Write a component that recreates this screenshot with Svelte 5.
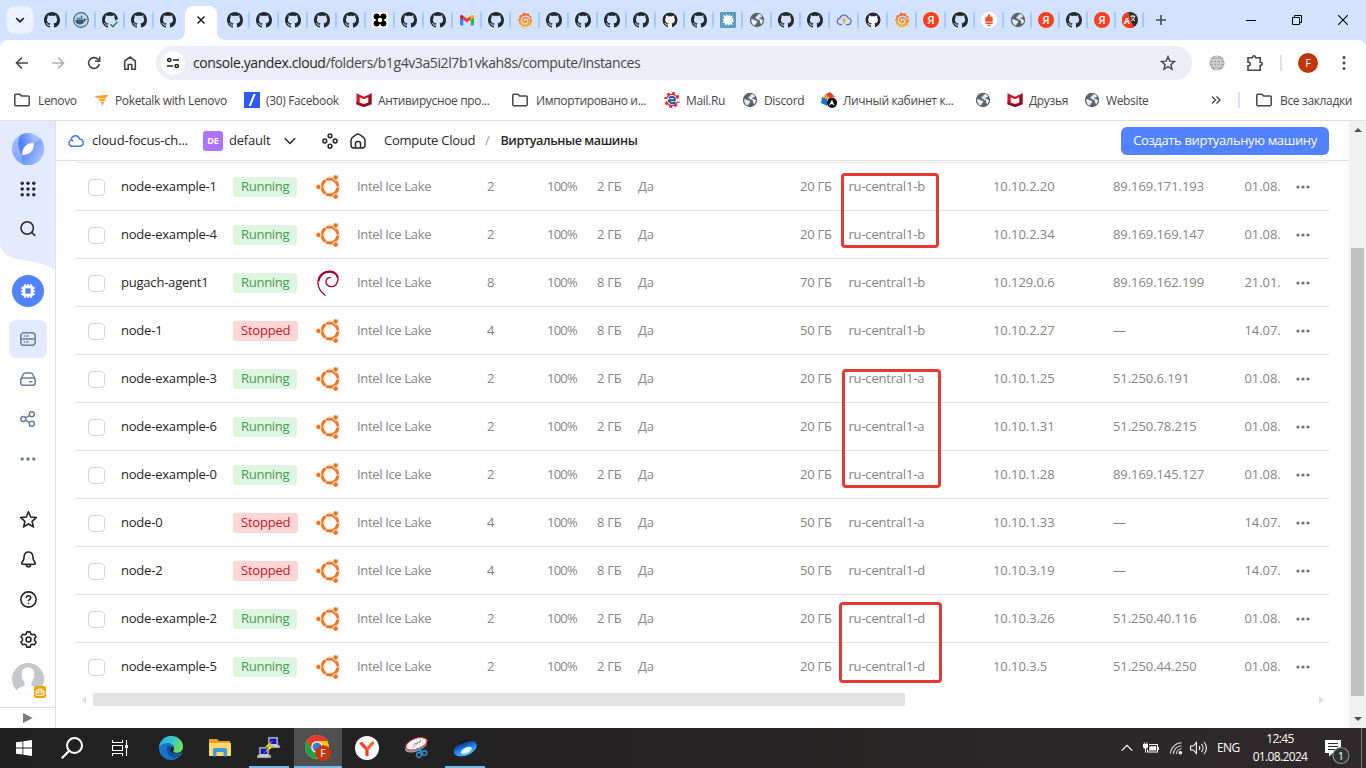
<script>
  const tabsBefore = ['github', 'docker', 'githubCheck', 'github', 'github'];
  const tabsAfter = [
    'github', 'github', 'github', 'github', 'github', 'knot', 'github', 'github', 'gmail', 'github',
    'grafana', 'github', 'github', 'github', 'github', 'githubLight', 'github', 'splat', 'globe',
    'github', 'github', 'cloudBolt', 'githubLight', 'grafana', 'ya', 'github', 'prometheus'
  ];
  const tabsNarrow = ['globe', 'ya', 'github', 'ya', 'translate'];

  const bookmarks = [
    { icon: 'folder', label: 'Lenovo', width: 80 },
    { icon: 'bird', label: 'Poketalk with Lenovo', width: 150 },
    { icon: 'slash', label: '(30) Facebook', width: 112 },
    { icon: 'mcafee', label: 'Антивирусное про...', width: 156 },
    { icon: 'folder', label: 'Импортировано и...', width: 152 },
    { icon: 'mailru', label: 'Mail.Ru', width: 78 },
    { icon: 'globe', label: 'Discord', width: 79 },
    { icon: 'cabinet', label: 'Личный кабинет к...', width: 154 },
    { icon: 'globe', label: '', width: 32 },
    { icon: 'mcafee', label: 'Друзья', width: 77 },
    { icon: 'globe', label: 'Website', width: 80 }
  ];

  const vm = (name, running, cpu, ram, disk, zone, ip, ext, date, os = 'ubuntu') =>
    ({ name, running, cpu, ram, disk, zone, ip, ext, date, os });

  const machines = [
    vm('node-example-1', true, 2, 2, 20, 'b', '10.10.2.20', '89.169.171.193', '01.08.'),
    vm('node-example-4', true, 2, 2, 20, 'b', '10.10.2.34', '89.169.169.147', '01.08.'),
    vm('pugach-agent1', true, 8, 8, 70, 'b', '10.129.0.6', '89.169.162.199', '21.01.', 'debian'),
    vm('node-1', false, 4, 8, 50, 'b', '10.10.2.27', '—', '14.07.'),
    vm('node-example-3', true, 2, 2, 20, 'a', '10.10.1.25', '51.250.6.191', '01.08.'),
    vm('node-example-6', true, 2, 2, 20, 'a', '10.10.1.31', '51.250.78.215', '01.08.'),
    vm('node-example-0', true, 2, 2, 20, 'a', '10.10.1.28', '89.169.145.127', '01.08.'),
    vm('node-0', false, 4, 8, 50, 'a', '10.10.1.33', '—', '14.07.'),
    vm('node-2', false, 4, 8, 50, 'd', '10.10.3.19', '—', '14.07.'),
    vm('node-example-2', true, 2, 2, 20, 'd', '10.10.3.26', '51.250.40.116', '01.08.'),
    vm('node-example-5', true, 2, 2, 20, 'd', '10.10.3.5', '51.250.44.250', '01.08.')
  ];

  const octocat = 'M8 0C3.58 0 0 3.58 0 8c0 3.54 2.29 6.53 5.47 7.59.4.07.55-.17.55-.38 0-.19-.01-.82-.01-1.49-2.01.37-2.53-.49-2.69-.94-.09-.23-.48-.94-.82-1.13-.28-.15-.68-.52-.01-.53.63-.01 1.08.58 1.23.82.72 1.21 1.87.87 2.33.66.07-.52.28-.87.51-1.07-1.78-.2-3.64-.89-3.64-3.95 0-.87.31-1.59.82-2.15-.08-.2-.36-1.02.08-2.12 0 0 .67-.21 2.2.82.64-.18 1.32-.27 2-.27s1.36.09 2 .27c1.53-1.04 2.2-.82 2.2-.82.44 1.1.16 1.92.08 2.12.51.56.82 1.27.82 2.15 0 3.07-1.87 3.75-3.65 3.95.29.25.54.73.54 1.48 0 1.07-.01 1.93-.01 2.2 0 .21.15.46.55.38A8.01 8.01 0 0 0 16 8c0-4.42-3.58-8-8-8z';
</script>

{#snippet glyph(name)}
  <svg class="g16" viewBox="0 0 16 16" fill="none">
    {#if name === 'github'}
      <path fill="#24292f" d={octocat} />
    {:else if name === 'githubLight'}
      <circle cx="8" cy="8" r="8" fill="#fff" /><path fill="#24292f" transform="translate(.5 .5) scale(.94)" d={octocat} />
    {:else if name === 'githubCheck'}
      <path fill="#24292f" d={octocat} /><path fill="#d3e3fd" d="M16 7v9H7v-3l1.500-2z" />
      <path d="M8.500 12.300l2.400 2.400L15.500 9.800" stroke="#1a8a3c" stroke-width="1.500" />
    {:else if name === 'docker'}
      <circle cx="8" cy="8" r="7.300" fill="#c4d7ea" stroke="#46667f" stroke-width="1.200" />
      <path fill="#2f5b7a" d="M2.400 7.800h8.500c.3-.6.2-1.300-.2-1.900.9.1 1.300.6 1.500 1.200.6-.1 1.200 0 1.600.3-.4.7-1.100 1-1.900 1-.9 2.700-2.700 4-5.400 4-2.600 0-4-1.600-4.100-4.600zM4 5.700h1.500v1.500H4zM5.900 5.700h1.500v1.500H5.900zM7.800 5.700h1.500v1.500H7.800zM7.800 3.800h1.500v1.500H7.800z" />
    {:else if name === 'knot'}
      <rect width="16" height="16" rx="3" fill="#fff" />
      <rect x="5" y="5" width="6" height="6" stroke="#000" stroke-width="1.600" />
      <g fill="#000"><circle cx="4.600" cy="4.600" r="3" /><circle cx="11.400" cy="4.600" r="3" /><circle cx="4.600" cy="11.400" r="3" /><circle cx="11.400" cy="11.400" r="3" /></g>
      <rect x="6.200" y="6.200" width="3.600" height="3.600" fill="#fff" />
    {:else if name === 'gmail'}
      <path fill="#4285f4" d="M1 3.500l3.300 2.300V13.500H2a1 1 0 0 1-1-1z" />
      <path fill="#34a853" d="M11.700 6L15 3.500v9a1 1 0 0 1-1 1h-2.300z" />
      <path fill="#ea4335" d="M4.300 3.700L8 6.500l3.700-2.800v4L8 10.500 4.300 7.700z" />
      <path fill="#c5221f" d="M1 4.500C1 2.800 2.600 2.300 4.300 3.700v4L1 5.500z" />
      <path fill="#fbbc04" d="M15 4.500c0-1.700-1.600-2.200-3.300-.8v4L15 5.500z" />
    {:else if name === 'grafana'}
      <linearGradient id="graf" x1="0" y1="0" x2="0" y2="1"><stop stop-color="#f05a28" /><stop offset="1" stop-color="#fbc02d" /></linearGradient>
      <path fill="url(#graf)" d="M7 .5l2 1.200 2.500-.5.9 2.300 2 1.100-.2 2.400 1.400 1.900-1.500 1.800-.1 2.500-2.400.7L9.800 15.500 7.700 14.700l-2.500.7-1-2.200-2.300-1.100.4-2.300L.7 7.900l1.600-1.700.1-2.600 2.500-.7z" />
      <path d="M13 7.500C12.300 4.800 9.600 3.500 7.300 4.300 4.500 5.200 3.500 8 5 10.400c1.200 1.900 4.200 2.200 5.500.3 1-1.500.1-3.500-1.500-3.700-1.300-.2-2.300 1-1.500 2" stroke="#d3e3fd" stroke-width="1.300" />
    {:else if name === 'splat'}
      <rect width="16" height="16" rx="1" fill="#5b9bbb" />
      <path fill="#fff" d="M3 2.500l2.700 1.800L6.600 2l1.600 2.200 1.700-2 .4 2.300L13 3.500l-1 2.800 2.200.5-1.800 1.400 1.800 1.600-2.300.5.6 2.900-2.700-1.300L8.700 14l-1.300-2-2.200 1.600-.1-2.700-2.700.2 1.500-2.300L2.200 7.500l1.900-1z" />
    {:else if name === 'globe'}
      <circle cx="8" cy="8" r="7.200" fill="#5f6368" />
      <path fill="#e3ebf7" d="M2.200 7.200C3.600 7 5 7.400 5.700 8.300c1.500.3 2.700.7 2.500 1.800-.2 1-1.500 1.200-1.700 2.500L5.400 13.500C3.100 12.400 2 10 2.200 7.200zM8.300 3l2-1c1 .4 2 1.100 2.600 2 .1 1-.9 1.600-1.700 1.400L9.600 6.400l2.600.7c.5.9 1.300 1.200 1.900 1.100-.1 1.600-.9 3.100-2 4.100l-1.200-2.100.1-1.700-2.100-.8-1.500-1.300-1.200-.4.7-1.600 1.600-.2z" />
    {:else if name === 'cloudBolt'}
      <path d="M4.200 12.700a3.300 3.300 0 0 1-.3-6.500A4.300 4.300 0 0 1 12 5.800a3.500 3.500 0 0 1 .2 6.900H10M4.200 12.700H6" stroke="#5870b8" stroke-width="1.200" />
      <path fill="#f2a32c" d="M9.500 4.500L5.800 9h1.900l-1.500 4.500 4.300-5.500H8.300z" />
    {:else if name === 'ya'}
      <circle cx="8" cy="8" r="8" fill="#fc3f1d" /><text x="8" y="12.200" text-anchor="middle" font-size="11.500" font-weight="600" fill="#fff">Я</text>
    {:else if name === 'prometheus'}
      <circle cx="8" cy="8" r="8" fill="#fff" />
      <path fill="#e6522c" d="M8 1.500c.8 1.500 1.800 2.500 1.500 4.200.7-.5.9-1.100.9-1.900 1.300 2 1.900 3.800 1 6H4.600c-1-2.200-.3-4 .9-5.700 0 .7.300 1.200.7 1.600C6 4 7.500 3 8 1.500zM4.300 10.500h7.400V12H4.300zM6 12.700h4c-.2.900-1 1.500-2 1.500s-1.800-.6-2-1.500z" />
    {:else if name === 'translate'}
      <circle cx="8" cy="8" r="8" fill="#2b2b2e" /><path fill="#fc3f1d" d="M6.500.2A8 8 0 1 0 12 14.900L8.500 8z" />
      <text x="5" y="11.800" text-anchor="middle" font-size="8.500" font-weight="700" fill="#fff">A</text>
      <path d="M8.300 4.200h5M10.800 3v1.200M12.600 4.500C12 7 10.500 8 9.300 8.600M9.500 5.500c.6 1.700 2 2.700 3.500 3.200" stroke="#fff" stroke-width="1" />
    {:else if name === 'folder'}
      <path d="M.8 3.200a1 1 0 0 1 1-1h4l1.700 1.700h6.700a1 1 0 0 1 1 1v7.900a1 1 0 0 1-1 1H1.800a1 1 0 0 1-1-1z" stroke="#474747" stroke-width="1.500" />
    {:else if name === 'bird'}
      <path fill="#f9a32a" d="M.5 4.200C4 3.800 9 3 14.300 2.800c-.4 1.300-1 2-2 2.600-1 .7-1.500.4-2.500.8C7 6.500 2.800 6.800.5 4.200zM4 7.300C7 7.300 9 7 12 6.200c-.2 1.600-1 2.500-2.800 3C7 9.600 5 9.200 4 7.300zM6.200 10c1.500.1 2.500 0 3.900-.4-.2 1.700-.9 3.300-2.300 4.300.3-1.600-.3-2.800-1.600-3.900z" />
    {:else if name === 'slash'}
      <rect width="16" height="16" fill="#2f5bf5" /><path fill="#fff" d="M9.500 2h2.200L6.900 14H4.700z" />
    {:else if name === 'mcafee'}
      <path fill="#d3142b" d="M.5 1.300L8 4.700l7.500-3.400v11L8 15 .5 12.300z" /><path fill="#8f0f1e" d="M.5 9l3 2.500L8 12.500V15L.5 12.300zM12.300 5l3.200-3.700v11L8 15v-2.500l4.300-2z" />
      <path fill="#fff" d="M3.700 5.200L8 7.300l4.300-2.100v5.200L8 12l-4.300-1.600z" />
    {:else if name === 'mailru'}
      <circle cx="8" cy="8" r="6.600" stroke="#e0262d" stroke-width="2.600" stroke-dasharray="2.700 2.480" /><circle cx="8" cy="8" r="5.600" fill="#fff" stroke="#e0262d" stroke-width="1.200" /><path fill="#fff" d="M12.500 7H16v2.500h-3.500zM0 7h3.500v2H0z" />
      <path d="M4 8.200h6.800c.6-2.200-.8-3.200-2.800-3.200-1.400 0-2.300.4-3 1M5 8.500c.3 3 4.500 3.500 6.500 1.700" stroke="#1b4fa0" stroke-width="1.900" />
    {:else if name === 'cabinet'}
      <path fill="#1976c5" d="M1 5l5 2v7L0 11z" /><path fill="#f3a01c" d="M2 5l3-3 5 1-2 5z" /><path fill="#e23b2e" d="M5 2l4-2 3 3 2 2-5 1z" />
      <circle cx="11" cy="10.800" r="5.100" fill="#111" /><path fill="#fff" d="M11 7.600l2.300 5.600H12l-.5-1.200H9.900l-.7 1.200H8.100z" />
    {/if}
  </svg>
{/snippet}

{#snippet ubuntu()}
  <svg class="os" viewBox="0 0 24 24" fill="none">
    <circle cx="14" cy="12" r="8" stroke="#f47421" stroke-width="3" />
    <path d="M14 12h10.500M14 12L8.800 3M14 12L8.800 21" stroke="#fff" stroke-width=".9" />
    <g fill="#f47421" stroke="#fff" stroke-width=".9"><circle cx="2.500" cy="12" r="2.700" /><circle cx="19.600" cy="2.500" r="2.800" /><circle cx="19.600" cy="21.500" r="2.800" /></g>
  </svg>
{/snippet}

{#snippet tab(name, narrow)}
  <div class="tab" class:narrow>{@render glyph(name)}<i></i></div>
{/snippet}

<div class="screen">
  <div class="strip">
    <div class="tablist"><svg width="10" height="6" viewBox="0 0 10 6"><path d="M1.200 1l3.800 3.700L8.800 1" fill="none" stroke="#1f1f1f" stroke-width="1.700" /></svg></div>
    <div class="tabs first">{#each tabsBefore as t}{@render tab(t, false)}{/each}</div>
    <div class="active"><svg width="8" height="8" viewBox="0 0 8 8"><path d="M.5.500l7 7M7.500.500l-7 7" stroke="#1f1f1f" stroke-width="1.500" /></svg></div>
    <div class="tabs">{#each tabsAfter as t}{@render tab(t, false)}{/each}{#each tabsNarrow as t}{@render tab(t, true)}{/each}</div>
    <svg class="plus" width="10" height="10" viewBox="0 0 10 10"><path d="M5 0v10M0 5h10" stroke="#474747" stroke-width="1.600" /></svg>
    <div class="win">
      <svg viewBox="0 0 10 10"><path d="M0 5.500h10" stroke="#000" /></svg>
      <svg viewBox="0 0 10 10"><path d="M.5 2.500h7v7h-7zM2.500 2.500v-2h7v7h-2" fill="none" stroke="#000" /></svg>
      <svg viewBox="0 0 10 10"><path d="M0 0l10 10M10 0L0 10" stroke="#000" stroke-width="1.100" /></svg>
    </div>
  </div>

  <div class="toolwrap"><div class="toolbar">
    <div class="nav">
      <svg viewBox="0 0 16 16"><path d="M14 8H3M8 2.500L2.500 8 8 13.500" stroke="#474747" /></svg>
      <svg viewBox="0 0 16 16"><path d="M2 8h11M8 2.500L13.500 8 8 13.500" stroke="#b0b0b0" /></svg>
      <svg viewBox="0 0 16 16"><path d="M13.300 9A5.400 5.400 0 1 1 12.200 4.600L13.500 6M13.700 1.500V6.200H9" stroke="#474747" /></svg>
      <svg viewBox="0 0 16 16"><path d="M2.700 14.200V6L8 2l5.300 4v8.200H9.800V9.500H6.200v4.700z" stroke="#474747" /></svg>
    </div>
    <div class="omni">
      <span class="tune"><svg viewBox="0 0 12 12"><g fill="none" stroke="#1f1f1f" stroke-width="1.500"><circle cx="2.300" cy="3" r="1.600" /><circle cx="9.700" cy="9" r="1.600" /><path d="M6 3h6M0 9h6" /></g></svg></span>
      <span class="url"><b>console.yandex.cloud</b>/folders/b1g4v3a5i2l7b1vkah8s/compute/instances</span>
      <svg class="fav" viewBox="0 0 16 16"><path d="M8 1.600l1.800 4.500 4.800.4-3.700 3.100 1.200 4.700L8 11.700l-4.100 2.600 1.200-4.700L1.400 6.500l4.800-.4z" fill="none" stroke="#474747" stroke-width="1.400" /></svg>
    </div>
    <svg class="ext1" viewBox="0 0 16 16"><circle cx="8" cy="8" r="7.600" fill="#a3a3a3" /><path d="M.5 5h15M.5 8h15M.5 11h15M8 .5v15M8 .5c-5 4-5 11 0 15M8 .5c5 4 5 11 0 15" fill="none" stroke="#eee" stroke-width=".8" /></svg>
    <svg class="ext2" viewBox="0 0 18 18"><path d="M2 3.700h4.500C6.300 1 9.700 1 9.500 3.700h4.700v4.600c2.700-.2 2.700 3.200 0 3v4.900H2v-4.300c3 .2 3-4 0-3.800z" fill="none" stroke="#474747" stroke-width="1.600" /></svg>
    <i class="vsep"></i>
    <span class="profile">F</span>
    <svg class="more" viewBox="0 0 4 16"><g fill="#474747"><circle cx="2" cy="2.500" r="1.500" /><circle cx="2" cy="8" r="1.500" /><circle cx="2" cy="13.500" r="1.500" /></g></svg>
  </div></div>

  <div class="bookmarks">
    {#each bookmarks as b}
      <div class="bm {b.icon}" style="width: {b.width}px">{@render glyph(b.icon)}<span>{b.label}</span></div>
    {/each}
    <svg class="chev" viewBox="0 0 10 8"><path d="M1 .500L4.500 4 1 7.500M5.500.500L9 4 5.500 7.500" fill="none" stroke="#474747" stroke-width="1.400" /></svg>
    <i class="vsep bsep"></i>
    <div class="bm folder all">{@render glyph('folder')}<span>Все закладки</span></div>
  </div>

  <div class="page">
    <aside>
      <svg class="wave" viewBox="0 0 55 150" preserveAspectRatio="none"><path fill="#e5ebff" d="M0 0h55v149C51 146 44 143 36 141.500L15 137.500C6 136 0 130 0 121z" /></svg>
      <div class="side">
        <svg class="s32" viewBox="0 0 32 32">
          <linearGradient id="ya" x1="0" y1="0" x2="0" y2="1"><stop stop-color="#a9c1ff" /><stop offset="1" stop-color="#7ea2fb" /></linearGradient>
          <linearGradient id="yb" x1="1" y1="0" x2="0" y2=".5"><stop stop-color="#b4c8ff" /><stop offset=".8" stop-color="#5282ff" /></linearGradient>
          <linearGradient id="yc" x1="0" y1="0" x2="1" y2=".6"><stop stop-color="#3f76ff" /><stop offset="1" stop-color="#a9c1ff" /></linearGradient>
          <circle cx="16" cy="16" r="16" fill="url(#ya)" />
          <path fill="url(#yb)" d="M9.500 1.400A16 16 0 0 1 21.500 1c1.500 3 1.500 6 .5 9-6 0-11 4-12 12C5 15 5 6 9.500 1.400z" />
          <path fill="url(#yc)" d="M10.200 22c-.8 3-.8 6 .2 9.200A16 16 0 0 0 32 16c0-5-2-9-4-11 0 2-2 4-6 5 .2 6.500-3.500 12-11.800 12z" />
          <path fill="#fff" d="M22 10c.2 6.500-3.500 12-11.800 12C10 14.500 14.500 9.500 22 10z" />
        </svg>
        <svg viewBox="0 0 16 16"><g fill="#262626"><circle cx="2.200" cy="2.200" r="1.700" /><circle cx="8" cy="2.200" r="1.700" /><circle cx="13.800" cy="2.200" r="1.700" /><circle cx="2.200" cy="8" r="1.700" /><circle cx="8" cy="8" r="1.700" /><circle cx="13.800" cy="8" r="1.700" /><circle cx="2.200" cy="13.800" r="1.700" /><circle cx="8" cy="13.800" r="1.700" /><circle cx="13.800" cy="13.800" r="1.700" /></g></svg>
        <svg viewBox="0 0 16 16"><circle cx="7.200" cy="7" r="6.200" fill="none" stroke="#262626" stroke-width="1.500" /><path d="M11.800 11.500l3.500 3.500" stroke="#262626" stroke-width="1.600" /></svg>
        <svg class="s32 chip" viewBox="0 0 32 32"><circle cx="16" cy="16" r="16" fill="#5282ff" /><path d="M13 9v14M16 9v14M19 9v14M9 13h14M9 16h14M9 19h14" stroke="#fff" stroke-width="1.500" /><rect x="10.500" y="10.500" width="11" height="11" rx="2" fill="#fff" /><rect x="13.300" y="13.300" width="5.400" height="5.400" fill="#5282ff" /></svg>
        <span class="sel"><svg class="mut" viewBox="0 0 16 16"><rect x=".8" y="1.800" width="14.400" height="12.400" rx="3" /><path d="M1 8h14M3.700 5H5M6 5h2.500M3.700 11H5M6 11h2.500" /></svg></span>
        <svg class="mut" viewBox="0 0 16 16"><path d="M1 8.500l2.200-5A2.500 2.500 0 0 1 5.500 2h5a2.500 2.500 0 0 1 2.300 1.500l2.200 5" /><rect x=".8" y="7" width="14.400" height="7.200" rx="2.500" /><path d="M9 10.700h3.500" /></svg>
        <svg class="mut" viewBox="0 0 16 16"><circle cx="3.300" cy="8" r="2.500" /><circle cx="11.800" cy="3.300" r="2.500" /><circle cx="11.800" cy="12.700" r="2.500" /><path d="M5.500 6.800l4.100-2.400M5.500 9.200l4.100 2.400" /></svg>
        <svg class="dots" viewBox="0 0 16 16"><g fill="#6b8099"><circle cx="2.200" cy="8" r="1.700" /><circle cx="8" cy="8" r="1.700" /><circle cx="13.800" cy="8" r="1.700" /></g></svg>
        <svg class="drk star" viewBox="0 0 16 16"><path d="M8 .900l2.100 4.800 5.200.500-3.900 3.500 1.100 5.100L8 12.200l-4.500 2.600 1.100-5.100L.7 6.200l5.200-.5z" /></svg>
        <svg class="drk" viewBox="0 0 16 16"><path d="M8 1C5.500 1 4.200 2.700 3.900 5L3.500 8 1.700 11.200c-.2.600 0 1.200.8 1.200h11c.8 0 1-.6.8-1.200L12.500 8l-.4-3C11.800 2.700 10.500 1 8 1zM6 12.800c.3 2.700 3.700 2.700 4 0" /></svg>
        <svg class="drk" viewBox="0 0 16 16"><circle cx="8" cy="8" r="7.200" /><path d="M5.900 6.500c0-2.800 4.200-2.700 4.200-.2 0 1.500-2 1.600-2.100 3.100M8 11v1.400" /></svg>
        <svg class="drk" viewBox="0 0 16 16"><path d="M6.500.800h3l.6 2 1.300.700 2.100-.5 1.600 2.600L13.700 7.100v1.800l1.400 1.500-1.600 2.600-2.100-.5-1.300.7-.6 2h-3l-.6-2-1.300-.7-2.100.5L.9 10.400 2.300 8.900V7.100L.9 5.600 2.500 3l2.100.5 1.300-.7z" stroke-linejoin="round" /><circle cx="8" cy="8" r="2.300" /></svg>
        <span class="avatar">
          <svg viewBox="0 0 32 32"><defs><clipPath id="av"><circle cx="16" cy="16" r="16" /></clipPath></defs><g clip-path="url(#av)"><rect width="32" height="32" fill="#c4c8cb" /><path fill="#fff" d="M16 4.500c4 0 6.300 2.500 6.300 6.500 0 4-1 6-2.800 8v3.500l6.500 3 3 7H3l3-7 6.500-3V19c-2-2-2.800-4-2.800-8 0-4 2.300-6.500 6.300-6.500z" /></g></svg>
          <i><svg viewBox="0 0 12 12"><path d="M2 5h8v3.500a1 1 0 0 1-1 1H3a1 1 0 0 1-1-1zM4 5V3h4v2M2 7h8" fill="none" stroke="#fff" stroke-width=".9" /></svg></i>
        </span>
      </div>
      <div class="expand"><svg viewBox="0 0 10 10"><path fill="#7b7b7b" d="M0 0l9.700 5L0 10z" /></svg></div>
    </aside>

    <main>
      <header>
        <svg class="cl" viewBox="0 0 16 16"><path d="M4 13.300a3.300 3.300 0 0 1-.8-6.400C3.600 4 5.500 2.700 7.500 2.700c2.200 0 3.500 1.300 4 3.200 2.200-.1 3.700 1.600 3.700 3.700s-1.500 3.700-3.500 3.700zM5 8.500C4.800 7.500 4 7 3.200 6.900" fill="none" stroke="#4479f0" stroke-width="1.500" /></svg>
        <span class="cloudname">cloud-focus-ch...</span>
        <span class="de">DE</span>
        <span class="folder-name">default</span>
        <svg class="dn" viewBox="0 0 12 8"><path d="M.8 1.300L6 6.500l5.200-5.200" fill="none" stroke="#262626" stroke-width="1.500" /></svg>
        <svg class="drk four" viewBox="0 0 16 16"><circle cx="8" cy="2.800" r="1.900" /><circle cx="8" cy="13.200" r="1.900" /><circle cx="2.800" cy="8" r="1.900" /><circle cx="13.200" cy="8" r="1.900" /></svg>
        <svg class="drk hm" viewBox="0 0 16 16"><path d="M1 7.500C1 6 1.500 5.200 2.500 4.400L6.500 1.500a2.500 2.500 0 0 1 3 0l4 2.900C14.500 5.200 15 6 15 7.500V12a3 3 0 0 1-3 3H4a3 3 0 0 1-3-3zM5.500 15v-4.500a2 2 0 0 1 2-2h1a2 2 0 0 1 2 2V15" /></svg>
        <span class="crumb">Compute Cloud</span>
        <span class="sl">/</span>
        <span class="current">Виртуальные машины</span>
        <button>Создать виртуальную машину</button>
      </header>

      <div class="table">
        {#each machines as m}
          <div class="row">
            <b class="check"></b>
            <span class="name">{m.name}</span>
            <div><em class:stopped={!m.running}>{m.running ? 'Running' : 'Stopped'}</em></div>
            <div>
              {#if m.os === 'ubuntu'}{@render ubuntu()}{:else}
                <svg class="os deb" viewBox="0 0 24 26"><path d="M9.500 25.500C4.500 22 1.500 17.500 2 11.500 2.600 5 8 .8 13.800 1.200c5.200.3 8.700 4 8.200 8.600-.4 4.200-3.700 7.300-7.300 6.800-3.300-.4-5.300-3.200-4.500-6 .5-1.900 2.300-3.300 4.500-2.800" fill="none" stroke="#a80030" stroke-width="1.300" /><path d="M2.500 11C4 5 8.500 1.500 14 1.700c4.500.3 7 2.500 7.700 5.800" fill="none" stroke="#a80030" stroke-width="2" /></svg>
              {/if}
            </div>
            <span class="plat">Intel Ice Lake</span>
            <span>{m.cpu}</span>
            <span class="pct">100%</span>
            <span class="gb">{m.ram} ГБ</span>
            <span class="gb">Да</span>
            <span class="gb disk">{m.disk} ГБ</span>
            <span class="zone">ru-central1-{m.zone}</span>
            <span class="ip">{m.ip}</span>
            <span class="ip">{m.ext}</span>
            <span class="ip">{m.date}</span>
            <svg class="rowdots" viewBox="0 0 14 4"><g fill="#707070"><circle cx="2" cy="2" r="1.600" /><circle cx="7" cy="2" r="1.600" /><circle cx="12" cy="2" r="1.600" /></g></svg>
          </div>
        {/each}
        <i class="mark m1"></i><i class="mark m2"></i><i class="mark m3"></i>
      </div>
      <div class="hscroll">
        <svg viewBox="0 0 4 8"><path fill="#dcdcdc" d="M4 0v8L0 4z" /></svg>
        <i></i>
        <svg viewBox="0 0 4 8"><path fill="#dcdcdc" d="M0 0v8l4-4z" /></svg>
      </div>
    </main>

    <div class="vscroll">
      <svg viewBox="0 0 8 4"><path fill="#505050" d="M0 4h8L4 0z" /></svg>
      <i></i>
      <svg viewBox="0 0 8 4"><path fill="#505050" d="M0 0h8L4 4z" /></svg>
    </div>
  </div>

  <footer>
    <div class="app sys"><svg width="16" height="16" viewBox="0 0 16 16"><path fill="#fff" d="M0 2.300l6.500-.900v6.200H0zM7.300 1.300L16 0v7.600H7.300zM0 8.400h6.500v6.200L0 13.700zM7.300 8.400H16V16l-8.700-1.300z" /></svg></div>
    <div class="app sys"><svg width="22" height="22" viewBox="0 0 22 22"><circle cx="13.500" cy="8.500" r="7.500" fill="none" stroke="#fff" stroke-width="2" /><path d="M8 14L.8 21.200" stroke="#fff" stroke-width="2.200" /></svg></div>
    <div class="app sys"><svg width="16" height="16" viewBox="0 0 16 16"><path d="M.5 0v2.500h10V0M.5 16v-2.500h10V16M.5 5.500h10v5H.5zM14.500 0v16" fill="none" stroke="#fff" stroke-width="1.100" /><path fill="#fff" d="M13 5h3v3h-3z" /></svg></div>
    <div class="app edge"><svg width="24" height="24" viewBox="0 0 24 24">
      <linearGradient id="e1" x1="0" y1="0" x2="1" y2=".3"><stop stop-color="#2aa3e8" /><stop offset=".6" stop-color="#36c8c4" /><stop offset="1" stop-color="#6edb5a" /></linearGradient>
      <circle cx="12" cy="12" r="12" fill="#1673c9" /><path fill="url(#e1)" d="M0 11C1 4.500 6 0 12 0c7 0 12 5 12 10.500 0 4-3 6.500-6.500 6.500-3 0-4.300-1-3.500-2.300 3-4-1-7.700-5-7.700-4 0-7 2-9 4z" />
      <path fill="#0c4f9d" d="M9 9.500c-3 4 0 11.500 6 12.500 3-.2 5.500-2 6.500-4-3 1.500-7 1-9-1.500C10.500 14 11 12 12 11z" />
      <path fill="#202020" d="M13 10.500c-3 2-2 5.500 1 6.800 3 1.200 7 .8 9-1.300l1 1v-3l-3 2.500c-2 .7-5 .7-6.500-.2-1-.8.500-1.500.500-3.300 0-1-1-2-2-2.500z" />
    </svg></div>
    <div class="app"><svg width="22" height="20" viewBox="0 0 22 20"><path fill="#e5a11c" d="M0 1h8l2 2h11v15H0z" /><path fill="#ffd869" d="M0 5h22v13H0z" /><path fill="#3b9be0" d="M4 18.500V12a2 2 0 0 1 2-2h10a2 2 0 0 1 2 2v6.500h-3.500V14h-7v4.500z" /></svg></div>
    <div class="app open"><svg width="24" height="24" viewBox="0 0 24 24"><path fill="#c9c9c9" stroke="#444" stroke-width=".6" d="M11 1h10v8h2v3H10V9h1zM2 11h10v8h2v3H0v-3h2z" /><path fill="#1414d8" d="M12.500 2.500h7v5.500h-7zM3.500 12.500h7v5.500h-7z" /><path fill="#ffee1a" stroke="#665500" stroke-width=".4" d="M16 4.500l-8 6 4 .8-5.500 6.200 9.500-6.500-4-1z" /></svg></div>
    <div class="app open cur"><svg width="26" height="26" viewBox="0 0 26 26"><circle cx="12" cy="12" r="12" fill="#fbc116" /><path fill="#e33b2e" d="M1.600 6A12 12 0 0 1 22.400 6H12a6 6 0 0 0-5.200 3l-.5 5z" /><path fill="#1fa14f" d="M1.600 6l5.200 9a6 6 0 0 0 6.500 2.900L11 24A12 12 0 0 1 1.600 6z" /><circle cx="12" cy="12" r="5.600" fill="#fff" /><circle cx="12" cy="12" r="4.500" fill="#2a7de8" /><circle cx="18" cy="18" r="7.800" fill="#c4380f" /><text x="18" y="22" text-anchor="middle" font-size="10.500" fill="#fff">F</text></svg></div>
    <div class="app"><svg width="24" height="24" viewBox="0 0 24 24"><circle cx="12" cy="12" r="12" fill="#fff" /><path d="M5.500 6.500L12 13.500V20" fill="none" stroke="#fc3a24" stroke-width="3.200" /><path d="M18.500 6L12 13.500" stroke="#fb6a2c" stroke-width="3.200" /></svg></div>
    <div class="app"><svg width="24" height="24" viewBox="0 0 24 24"><ellipse cx="12" cy="10" rx="11.500" ry="5.500" transform="rotate(-20 12 10)" fill="#9b9b9b" /><ellipse cx="12.500" cy="8" rx="11" ry="5.300" transform="rotate(-20 12 8)" fill="#f5f5f5" stroke="#d53f3f" stroke-width="1" /><path d="M9 8.500l8-3M8.500 12L17 4" stroke="#888" stroke-width=".8" /><g fill="none" stroke="#2f8fd0" stroke-width="1.500"><path d="M12 13l6 2.500M17.500 11l-1.500 5.500" /><circle cx="15" cy="19" r="2.400" /><circle cx="20.500" cy="17" r="2.300" /></g></svg></div>
    <div class="app open"><svg width="24" height="20" viewBox="0 0 24 20"><linearGradient id="d1" x1="0" y1="0" x2="0" y2="1"><stop stop-color="#0d2d66" /><stop offset=".5" stop-color="#1c7df0" /><stop offset="1" stop-color="#59c0ff" /></linearGradient><ellipse cx="12" cy="10.500" rx="12" ry="7" transform="rotate(-22 12 10)" fill="url(#d1)" /><ellipse cx="13" cy="12.500" rx="6" ry="2.800" transform="rotate(-26 13 12)" fill="#e6f7ff" /><path fill="#101a33" d="M5 5.500C8 2.500 16 1 20 2.500 14 3 9 6 5 7z" /></svg></div>

    <div class="tray">
      <svg class="t1" viewBox="0 0 12 8"><path d="M.7 6.700L6 1.400l5.300 5.300" fill="none" stroke="#fff" stroke-width="1.200" /></svg>
      <svg class="t2" viewBox="0 0 16 12"><path d="M6 2.500h8.500v7.500H4.500V7.500M15.500 5v3" fill="none" stroke="#fff" stroke-width="1.100" /><path fill="#fff" d="M6.500 4.200h6.700v4.200H6z M0 2h5v2.500C5 6 4 6.500 3 6.500v4H2v-4C1 6.500 0 6 0 4.500zM.8.500h1V2h-1zM3.300.5h1V2h-1z" /></svg>
      <svg class="t3" viewBox="0 0 14 14"><g fill="none" stroke="#ddd" stroke-width="1.100"><path d="M1.500 12.500C1.500 7 6.500 1.800 12.700 1.800M4.500 13C4.500 8.500 8 4.800 12.700 4.800M7.500 13c0-3 2.200-5.200 5.200-5.200" /></g><circle cx="11.300" cy="11.800" r="1.800" fill="#fff" /></svg>
      <svg class="t4" viewBox="0 0 18 14"><path d="M.6 5h2.800l3-3.500v11l-3-3.500H.6zM9 5c1 1.200 1 2.800 0 4M11.500 3c2 2.300 2 5.700 0 8M14 1c3.200 3.500 3.200 8.500 0 12" fill="none" stroke="#fff" stroke-width="1.100" /></svg>
      <span class="lang">ENG</span>
      <span class="clock"><span>12:45</span><span class="date">01.08.2024</span></span>
      <svg class="note" viewBox="0 0 26 26"><path fill="#fff" d="M0 0h16v13H8l-4 3.500V13H0z" /><path d="M3 3.500h10M3 6.500h10M3 9.500h7" stroke="#2e292b" stroke-width="1.100" /><circle cx="16" cy="15.500" r="8" fill="#2f3334" stroke="#8e9293" stroke-width="1.100" /><text x="16" y="19.500" text-anchor="middle" font-size="11" fill="#fff">1</text></svg>
      <i></i>
    </div>
  </footer>
</div>

<style>
  :global(body) { margin: 0; overflow: hidden; }
  .screen { width: 1366px; height: 768px; display: flex; flex-direction: column; overflow: hidden; background: #fff; font-family: "Open Sans", "Noto Sans", sans-serif; }
  .screen svg { display: block; flex: none; }
  .screen span { white-space: pre; }
  .g16 { width: 16px; height: 16px; }

  .strip { height: 40px; flex: none; background: #d3e3fd; display: flex; align-items: center; }
  .tablist { width: 28px; height: 28px; border-radius: 9px; background: #ebf1fe; margin-left: 6px; margin-right: 4px; display: flex; align-items: center; justify-content: center; }
  .tabs { display: flex; }
  .tab { width: 29px; height: 16px; display: flex; padding-left: 6px; gap: 5px; box-sizing: border-box; }
  .tab.narrow { width: 28px; gap: 4px; }
  .tab i { width: 2px; height: 16px; background: #a8c7fa; border-radius: 1px; flex: none; }
  .tabs.first .tab:last-child i { visibility: hidden; }
  .active { align-self: flex-end; width: 32px; height: 34px; margin: 0 4px 0 2px; background: #fff; border-radius: 8px 8px 0 0; display: flex; align-items: center; justify-content: center; position: relative; }
  .active svg { margin-bottom: 6px; }
  .active::before, .active::after { content: ""; position: absolute; bottom: 0; width: 8px; height: 8px; }
  .active::before { left: -8px; background: radial-gradient(circle at 0 0, transparent 7.500px, #fff 8px); }
  .active::after { right: -8px; background: radial-gradient(circle at 100% 0, transparent 7.500px, #fff 8px); }
  .plus { margin-left: 12px; }
  .win { display: flex; gap: 36px; margin-left: auto; margin-right: 18px; }
  .win svg { width: 10px; height: 10px; }

  .toolwrap { background: #d3e3fd; flex: none; }
  .toolbar { height: 40px; background: #fff; border-radius: 8px 8px 0 0; display: flex; align-items: center; padding-top: 6px; box-sizing: border-box; }
  .nav { display: flex; gap: 20px; margin-left: 14px; width: 142px; }
  .nav svg { width: 16px; height: 16px; fill: none; stroke-width: 1.600; }
  .omni { width: 1036px; height: 34px; border-radius: 17px; background: #ebeef8; display: flex; align-items: center; }
  .tune { width: 24px; height: 24px; border-radius: 12px; background: #fff; margin: 0 8px 0 5px; display: flex; align-items: center; justify-content: center; }
  .tune svg { width: 12px; height: 12px; }
  .url { font-size: 14px; letter-spacing: -.4px; color: #474747; line-height: 20px; }
  .url b { font-weight: 400; color: #1f1f1f; }
  .fav { width: 16px; height: 16px; margin-left: auto; margin-right: 16px; }
  .ext1 { width: 16px; height: 16px; margin-left: 17px; }
  .ext2 { width: 18px; height: 18px; margin-left: 21px; }
  .vsep { width: 2px; height: 16px; background: #d3e3fd; margin-left: 16px; }
  .profile { width: 20px; height: 20px; border-radius: 10px; background: #bf360c; color: #fff; font-size: 11px; line-height: 20px; text-align: center; margin-left: 16px; }
  .more { width: 4px; height: 16px; margin-left: 24px; }

  .bookmarks { height: 40px; flex: none; display: flex; align-items: center; padding-left: 14px; font-size: 12px; letter-spacing: -.35px; color: #474747; border-bottom: 1px solid #dfe0e2; }
  .bm { display: flex; align-items: center; gap: 6px; flex: none; }
  .bm.folder { gap: 8px; }
  .bm.bird { gap: 5px; }
  .chev { width: 10px; height: 8px; margin-left: 47px; }
  .bsep { margin-left: 17px; }
  .all { margin-left: 16px; }

  .page { height: 607px; flex: none; display: flex; background: #fff; }
  aside { width: 55px; border-right: 1px solid #e0e0e3; position: relative; display: flex; flex-direction: column; flex: none; }
  .wave { position: absolute; left: 0; top: 0; width: 55px; height: 150px; }
  .side { position: relative; display: flex; flex-direction: column; align-items: center; padding-top: 12px; height: 586px; box-sizing: border-box; padding-left: 1px; gap: 24px; }
  .side > svg { width: 16px; height: 16px; }
  .side > svg.s32 { width: 32px; height: 32px; }
  .side > .s32:first-child { margin-bottom: -8px; }
  .side > .chip { margin: 14px 0 -11px; }
  .sel { width: 38px; height: 38px; border-radius: 7px; background: #e5ebff; display: flex; align-items: center; justify-content: center; margin: 0 0 -11px; }
  .mut { width: 16px; height: 16px; fill: none; stroke: #6b8099; stroke-width: 1.500; }
  .drk { width: 16px; height: 16px; fill: none; stroke: #262626; stroke-width: 1.500; }
  .side > .drk { width: 17px; height: 17px; margin: -.5px 0; }
  .side > .star { margin-top: 19.500px; }
  .avatar { width: 32px; height: 32px; position: relative; margin-top: -8px; }
  .avatar > svg { width: 32px; height: 32px; }
  .avatar i { position: absolute; right: -2px; bottom: -3px; width: 12px; height: 12px; border-radius: 2px; background: #f0a30e; }
  .avatar i svg { width: 12px; height: 12px; }
  .expand { flex: 1; border-top: 1px solid #e0e0e3; display: flex; align-items: center; padding-left: 23px; }
  .expand svg { width: 10px; height: 10px; }

  main { flex: 1; min-width: 0; }
  header { height: 39px; border-bottom: 1px solid #e0e0e3; display: flex; align-items: center; padding: 0 20px 0 12px; font-size: 13px; color: #262626; }
  .cl { width: 16px; height: 16px; margin-right: 8px; }
  .cloudname, .folder-name, .crumb, .sl { padding-bottom: 2px; }
  .cloudname { width: 111px; letter-spacing: -.16px; }
  .de { width: 20px; height: 20px; border-radius: 3px; background: #ad73ff; color: #fff; font-size: 9px; font-weight: 700; line-height: 20px; text-align: center; margin-right: 6px; }
  .folder-name { width: 55px; letter-spacing: -.2px; }
  .dn { width: 12px; height: 8px; margin-right: 26px; }
  .four { margin-right: 12px; }
  .hm { margin-right: 18px; }
  .crumb { width: 101px; letter-spacing: -.26px; }
  .sl { width: 15.500px; color: #999; }
  .current { font-weight: 600; letter-spacing: -.4px; font-size: 12.500px; }
  button { width: 208px; height: 28px; border: 0; border-radius: 6px; background: #5282ff; color: #fff; margin-left: auto; padding: 0 0 1px; font: 13px "Open Sans", sans-serif; letter-spacing: -.36px; white-space: nowrap; }

  .table { position: relative; margin: 1px 20px 0; border-top: 1px solid #e4e4e6; font-size: 13px; color: #858585; }
  .row { height: 48px; box-sizing: border-box; border-bottom: 1px solid #e4e4e6; display: grid; align-items: center; padding-left: 12px; grid-template-columns: 33px 112px 83px 41px 130px 60px 50px 41px 162px 48.500px 144.500px 120px 131.500px 51.500px 1fr; }
  .row:nth-child(11) { border-bottom-color: transparent; }
  .row > span { padding-bottom: 2px; }
  .check { width: 15px; height: 15px; border: 1px solid #d6d6da; border-radius: 4px; margin-top: 1px; }
  .row > .name { color: #262626; letter-spacing: -.21px; }
  em { display: inline-block; font-style: normal; height: 20px; line-height: 19px; padding: 0 8px; border-radius: 3px; background: #e0f5e0; color: #4a9a52; letter-spacing: -.28px; vertical-align: middle; }
  em.stopped { background: #ffd6d6; color: #c0202c; letter-spacing: -.2px; }
  .os { width: 24px; height: 24px; margin-top: 1px; }
  .deb { height: 26px; margin-top: 0; }
  .plat { letter-spacing: -.34px; }
  .pct { letter-spacing: -.800px; }
  .gb { letter-spacing: -.25px; }
  .zone { letter-spacing: -.2px; }
  .ip { letter-spacing: -.07px; }
  .rowdots { width: 14px; height: 4px; }
  .mark { position: absolute; box-sizing: border-box; border: 3px solid #e53a32; border-radius: 4px; }
  .m1 { left: 765px; top: 10px; width: 98px; height: 75px; }
  .m2 { left: 766px; top: 206px; width: 99px; height: 119px; }
  .m3 { left: 763px; top: 439px; width: 103px; height: 81px; }
  .hscroll { display: flex; align-items: center; margin: 2px 26px 0 26px; height: 13px; }
  .hscroll svg { width: 4px; height: 8px; }
  .hscroll i { width: 812px; height: 13px; background: #e3e3e3; margin: 0 auto 0 7px; }

  .vscroll { width: 17px; background: #f1f1f1; display: flex; flex-direction: column; align-items: center; padding: 7px 0 7px; box-sizing: border-box; flex: none; }
  .vscroll svg { width: 8px; height: 4px; }
  .vscroll i { width: 13px; height: 448px; background: #c1c1c1; margin: 116px 0 auto; }

  footer { height: 40px; flex: none; display: flex; background: linear-gradient(90deg, #202020, #262424 50%, #2f292b); color: #fff; }
  .app { width: 48px; margin-right: 1px; display: flex; align-items: center; justify-content: center; box-sizing: border-box; flex: none; }
  .app.sys { margin-right: 0; }
  .app.edge { margin-left: 3px; }
  .app.open { width: 40px; margin: 0 5px 0 4px; border-bottom: 2px solid #76b9ed; padding-top: 2px; }
  .app.cur { width: 48px; margin: 0 1px 0 0; background: #505050; }
  .tray { margin-left: auto; display: flex; align-items: center; }
  .t1 { width: 12px; height: 8px; margin-right: 10px; }
  .t2 { width: 16px; height: 12px; margin-right: 10px; }
  .t3 { width: 14px; height: 14px; margin-right: 7px; }
  .t4 { width: 18px; height: 14px; margin-right: 9px; }
  .lang { font-size: 12px; width: 35px; letter-spacing: -.600px; padding-bottom: 1px; }
  .clock { width: 56px; display: flex; flex-direction: column; align-items: center; font-size: 12px; line-height: 18px; letter-spacing: -.650px; }
  .note { width: 26px; height: 26px; margin: 9px 0 0 17px; }
  .tray > i { width: 1px; height: 40px; background: #7b7779; margin-left: 10px; margin-right: 4px; }
</style>
